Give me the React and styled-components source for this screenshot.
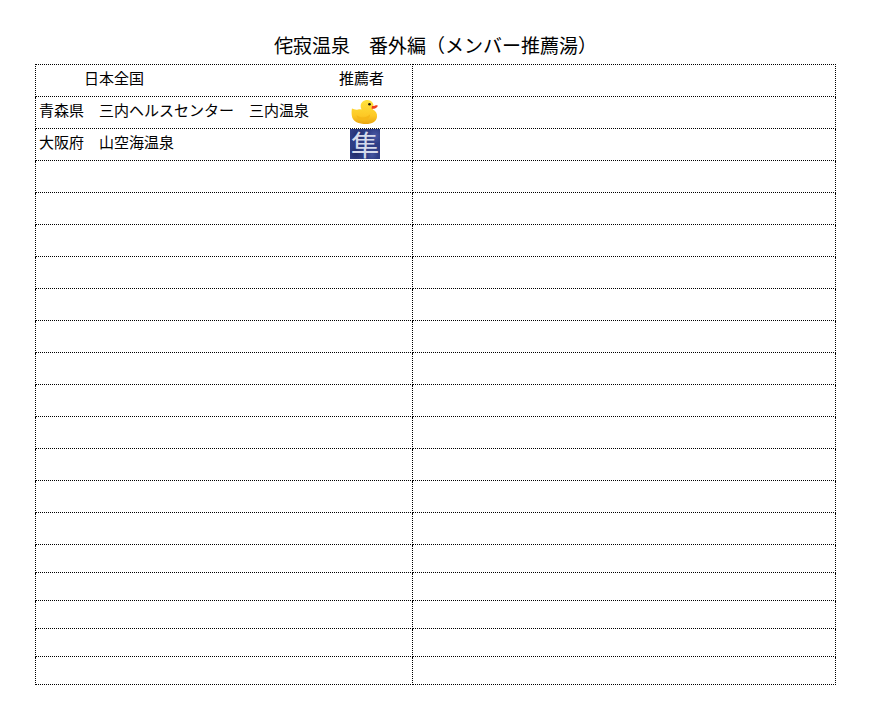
import React from "react";
import styled, { createGlobalStyle } from "styled-components";

const Global = createGlobalStyle`
  html, body { margin: 0; padding: 0; background: #fff; }
  body { font-family: "Noto Sans CJK JP", "Noto Sans", sans-serif; color: #000; }
`;

const Page = styled.div`
  width: 880px;
  height: 713px;
  padding: 32px 0 0 35px;
  box-sizing: border-box;
  overflow: hidden;
`;

const Title = styled.h1`
  width: 801px;
  height: 32px;
  margin: 0;
  font-size: 19px;
  line-height: 25px;
  font-weight: 400;
  text-align: center;
  white-space: pre;
`;

const Grid = styled.table`
  width: 801px;
  table-layout: fixed;
  border-collapse: collapse;
  font-size: 15px;
`;

const Row = styled.tr`
  height: ${(p) => (p.$short ? 28 : 32)}px;
`;

const Cell = styled.td`
  padding: 0;
  box-sizing: border-box;
  border: 1px dotted #000;
`;

const Entry = styled.div`
  display: flex;
  align-items: flex-start;
  height: 31px;
`;

const Place = styled.div`
  flex: 0 0 300px;
  box-sizing: border-box;
  padding-left: ${(p) => p.$indent}px;
  padding-top: 3px;
  line-height: 20px;
  white-space: pre;
`;

const Heading = styled.div`
  padding-left: 3px;
  padding-top: 3px;
  line-height: 20px;
  white-space: pre;
`;

const DuckIcon = styled.svg`
  display: block;
  flex: none;
  width: 30px;
  height: 30px;
  margin-left: 14px;
`;

const Tile = styled.div`
  flex: none;
  width: 30px;
  height: 30px;
  margin-left: 14px;
  font-size: 28px;
  font-weight: 400;
  line-height: 30px;
  text-align: center;
  color: #d5daec;
  background:
    radial-gradient(circle at 6px 24px, #1f2a66 0, transparent 7px),
    radial-gradient(circle at 25px 7px, #4a5aa6 0, transparent 8px),
    radial-gradient(circle at 22px 26px, #46559f 0, transparent 6px),
    radial-gradient(circle at 8px 6px, #222d6e 0, transparent 7px),
    #2f3d85;
`;

const Duck = () => (
  <DuckIcon viewBox="0 0 30 30">
    <defs>
      <linearGradient id="duckBody" x1="0" y1="0" x2="0" y2="1">
        <stop offset="0" stopColor="#ffe23e" />
        <stop offset="0.65" stopColor="#fdc926" />
        <stop offset="1" stopColor="#e9a512" />
      </linearGradient>
    </defs>
    <path
      d="M2 11.500 C4 12.500 6 13 8 12.500 C9.500 12 10.500 12 11.500 12.500 C10 9.500 10.500 6.500 12.500 4.800 C15.500 2.200 21 2.500 22.800 6 C24 8.500 23.500 11 22.800 12.500 C25.800 14 27.500 16.500 27 20 C26.500 24.500 22 27 16 27 C9 27 2.500 25 1.800 18.500 C1.500 16 1.500 13.500 2 11.500 Z"
      fill="url(#duckBody)"
    />
    <path d="M6.500 18 C10 21.500 16 21 20 17.500 C20.500 22.500 14 24.500 10 23 C8 22.300 7 20.500 6.500 18 Z" fill="#f6b818" />
    <path d="M22 9 C24 9.300 25.500 8 27.500 8.300 C28 9.500 27 10.500 25.500 11.200 C24 12 22.500 12 21.500 11.500 Z" fill="#ee3d1e" />
    <circle cx="19.500" cy="7.300" r="1.300" fill="#1c1407" />
  </DuckIcon>
);

const blanks = Array.from({ length: 17 }, (_, i) => i + 3);

export default function App() {
  return (
    <>
      <Global />
      <Page>
        <Title>侘寂温泉　番外編（メンバー推薦湯）</Title>
        <Grid>
          <colgroup>
            <col style={{ width: 377 }} />
            <col />
          </colgroup>
          <tbody>
            <Row>
              <Cell>
                <Entry>
                  <Place $indent={48}>日本全国</Place>
                  <Heading>推薦者</Heading>
                </Entry>
              </Cell>
              <Cell />
            </Row>
            <Row>
              <Cell>
                <Entry>
                  <Place $indent={3}>青森県　三内ヘルスセンター　三内温泉</Place>
                  <Duck />
                </Entry>
              </Cell>
              <Cell />
            </Row>
            <Row>
              <Cell>
                <Entry>
                  <Place $indent={3}>大阪府　山空海温泉</Place>
                  <Tile>隼</Tile>
                </Entry>
              </Cell>
              <Cell />
            </Row>
            {blanks.map((i) => (
              <Row key={i} $short={i >= 15}>
                <Cell />
                <Cell />
              </Row>
            ))}
          </tbody>
        </Grid>
      </Page>
    </>
  );
}
